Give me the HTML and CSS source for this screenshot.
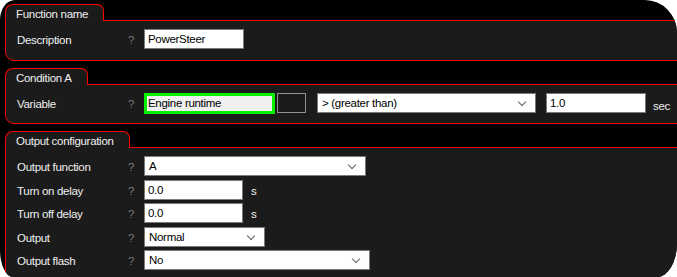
FILE: index.html
```html
<!DOCTYPE html>
<html lang="en">
<head>
    <meta charset="UTF-8">
    <title>Function settings</title>
    <link rel="stylesheet" href="styles.css">
</head>
<body>
    <div class="window">
        <div class="group">
            <div class="group-tab">Function name</div>
            <div class="group-body">
                <div class="row">
                    <span class="label">Description</span>
                    <span class="help">?</span>
                    <div class="field w100">PowerSteer</div>
                </div>
            </div>
        </div>

        <div class="group">
            <div class="group-tab">Condition A</div>
            <div class="group-body">
                <div class="row">
                    <span class="label">Variable</span>
                    <span class="help">?</span>
                    <div class="field variable">Engine runtime</div>
                    <div class="swatch"></div>
                    <div class="field select operator">&gt; (greater than)<span class="chevron"></span></div>
                    <div class="field value">1.0</div>
                    <span class="unit">sec</span>
                </div>
            </div>
        </div>

        <div class="group">
            <div class="group-tab">Output configuration</div>
            <div class="group-body rows">
                <div class="row">
                    <span class="label">Output function</span>
                    <span class="help">?</span>
                    <div class="field select w222">A<span class="chevron"></span></div>
                </div>
                <div class="row">
                    <span class="label">Turn on delay</span>
                    <span class="help">?</span>
                    <div class="field w99">0.0</div>
                    <span class="unit">s</span>
                </div>
                <div class="row">
                    <span class="label">Turn off delay</span>
                    <span class="help">?</span>
                    <div class="field w99">0.0</div>
                    <span class="unit">s</span>
                </div>
                <div class="row">
                    <span class="label">Output</span>
                    <span class="help">?</span>
                    <div class="field select w121">Normal<span class="chevron"></span></div>
                </div>
                <div class="row">
                    <span class="label">Output flash</span>
                    <span class="help">?</span>
                    <div class="field select w226">No<span class="chevron"></span></div>
                </div>
            </div>
        </div>
    </div>
</body>
</html>
```

FILE: styles.css
```css
body {
    margin: 0;
    background: #fff;
    font-family: "Liberation Sans", Arial, sans-serif;
    font-size: 11.5px;
    letter-spacing: -0.3px;
}
.window {
    width: 677px;
    height: 277px;
    box-sizing: border-box;
    padding: 4px 0 0 5px;
    background: #000;
    overflow: hidden;
    border-radius: 15px 32px 20px 13px / 20px 33px 34px 27px;
}
.group {
    margin-bottom: 7px;
    width: 700px;
}
.group-tab {
    display: inline-block;
    position: relative;
    z-index: 1;
    height: 16px;
    line-height: 18px;
    padding: 0 15px 0 10px;
    margin-bottom: -1px;
    color: #f0f0f0;
    background: #1b1b1b;
    border: 1px solid #f00;
    border-bottom: none;
    border-radius: 8px 7px 0 0;
}
.group-body {
    background: #1b1b1b;
    border: 1px solid #f00;
    border-radius: 0 0 0 9px;
    padding: 8px 0 10px 11px;
}
.group:first-child .group-body {
    padding-bottom: 11px;
}
.rows {
    display: flex;
    flex-direction: column;
    gap: 3.5px;
    padding-bottom: 40px;
}
.row {
    display: flex;
    align-items: center;
    height: 20px;
    color: #f0f0f0;
}
.label {
    width: 111px;
    flex: none;
    padding-top: 2px;
}
.help {
    width: 16px;
    flex: none;
    color: #7a7a7a;
    padding-top: 2px;
}
.field {
    position: relative;
    box-sizing: border-box;
    height: 20px;
    line-height: 18px;
    padding: 0 3px;
    background: #fff;
    border: 1px solid #7a7a7a;
    color: #000;
    white-space: nowrap;
}
.select {
    padding-left: 4px;
}
.chevron {
    position: absolute;
    right: 10px;
    top: 5px;
    width: 5px;
    height: 5px;
    border-right: 1px solid #606060;
    border-bottom: 1px solid #606060;
    transform: rotate(45deg);
}
.w100 { width: 100px; }
.w99 { width: 99px; }
.w121 { width: 121px; }
.w222 { width: 222px; }
.w226 { width: 226px; }
.variable {
    width: 131px;
    height: 21px;
    line-height: 15px;
    border: 3px solid #00f000;
    background: #f0f0f0;
    padding-left: 1px;
}
.swatch {
    box-sizing: border-box;
    width: 29px;
    height: 20px;
    margin-left: 2px;
    border: 1px solid #909090;
    background: #1b1b1b;
}
.operator {
    width: 219px;
    margin-left: 11px;
}
.value {
    width: 100px;
    margin-left: 10px;
}
.unit {
    margin-left: 8px;
    padding-top: 2px;
    color: #f0f0f0;
}
.value + .unit {
    margin-left: 7px;
    padding-top: 5px;
}
```
